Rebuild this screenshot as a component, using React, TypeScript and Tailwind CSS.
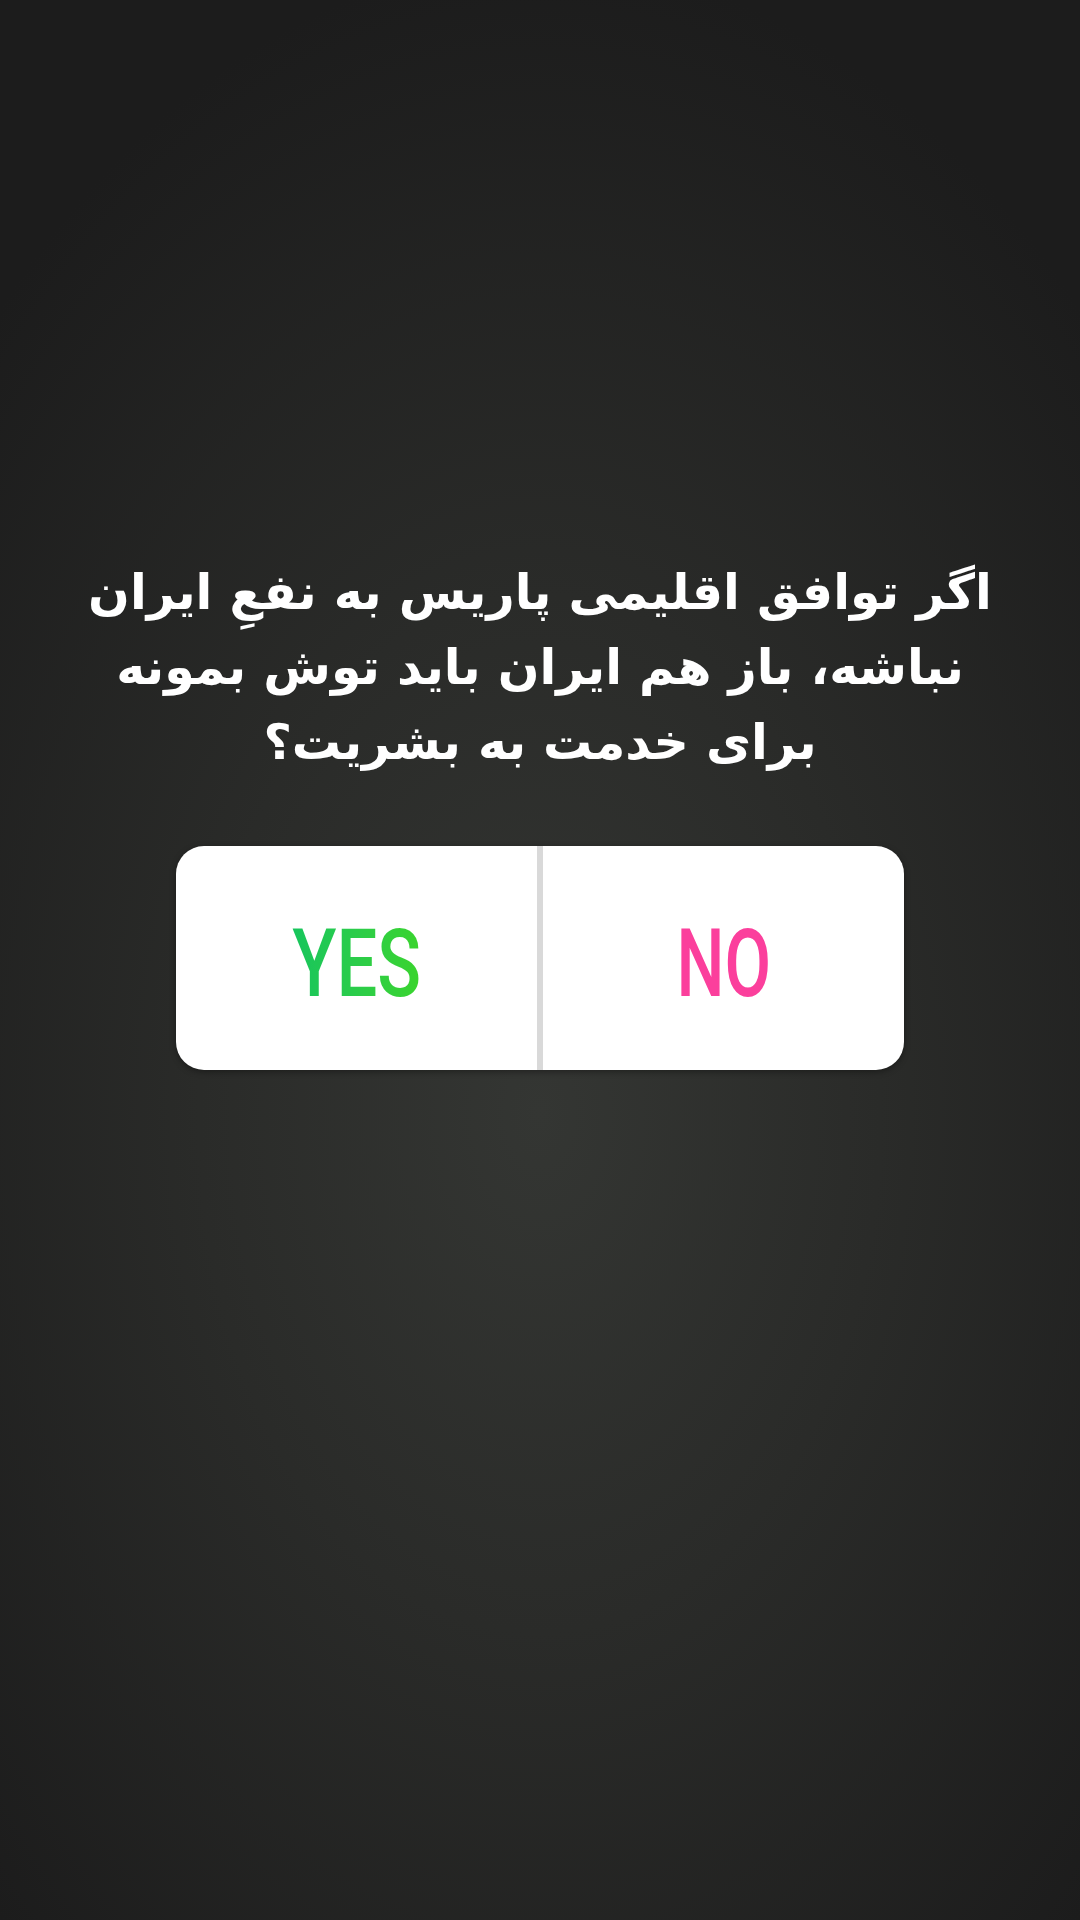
export default function App() {
  return (
    <div className="w-[1080px] h-[1920px] flex flex-col items-center bg-[radial-gradient(ellipse_70%_60%_at_50%_58%,#343633_0%,#2a2b29_45%,#1c1c1c_100%)]">
      <div
        dir="rtl"
        className="mt-[555px] w-full text-center text-white font-bold text-[49px] leading-[75px] font-['DejaVu_Sans',sans-serif]"
      >
        اگر توافق اقلیمی پاریس به نفعِ ایران
        <br />
        نباشه، باز هم ایران باید توش بمونه
        <br />
        برای خدمت به بشریت؟
      </div>

      <div className="mt-[66px] w-[728px] h-[224px] flex bg-white rounded-[28px] overflow-hidden shadow-[0_2px_6px_rgba(0,0,0,0.35)]">
        <div className="flex-1 flex items-center justify-center pt-[12px]">
          <span className="inline-block scale-x-[0.77] text-[94px] leading-none font-['Roboto',sans-serif] font-medium bg-gradient-to-r from-[#16c55c] to-[#3ad42c] bg-clip-text text-transparent">
            YES
          </span>
        </div>
        <div className="w-[6px] bg-[#d9d9d9]" />
        <div className="flex-1 flex items-center justify-center pt-[12px]">
          <span className="inline-block scale-x-[0.72] text-[94px] leading-none font-['Roboto',sans-serif] font-medium text-[#fb3f9c]">
            NO
          </span>
        </div>
      </div>
    </div>
  )
}
